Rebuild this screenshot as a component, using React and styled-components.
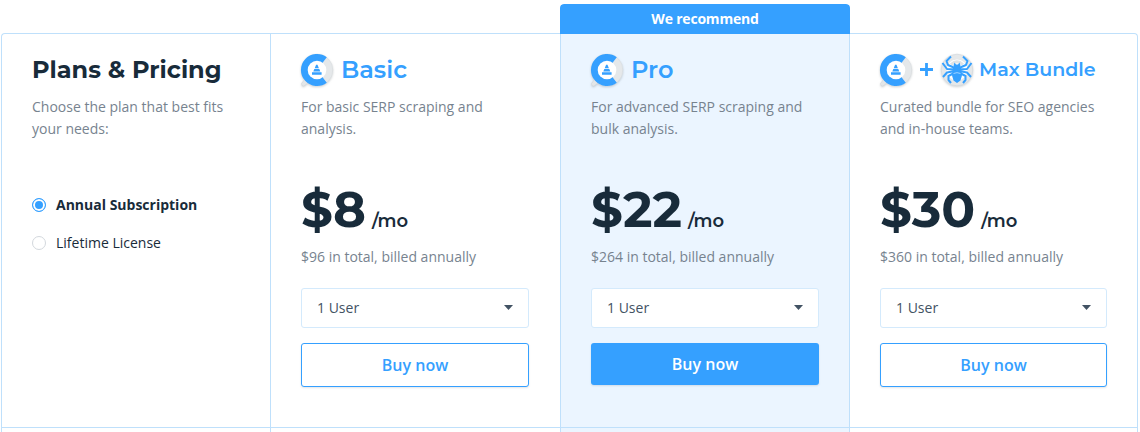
import React from "react";
import styled, { createGlobalStyle, css } from "styled-components";

const display = `"Montserrat", Inter, sans-serif`;
const blue = "#35a0ff";
const line = "#bfe0fb";

const GlobalStyle = createGlobalStyle`
  * { box-sizing: border-box; }
  body { margin: 0; background: #fff; font-family: "Open Sans", sans-serif; overflow: hidden; }
  h2, h3, p { margin: 0; }
`;

const Page = styled.main`
  width: 1140px;
  height: 432px;
  overflow: hidden;
  padding: 4px 2px 0 1px;
`;

const Plans = styled.section`
  display: grid;
  grid-template-columns: 269px 290px 290px 288px;
  align-items: end;
`;

const Column = styled.article`
  height: 399px;
  border-left: 1px solid ${line};
  border-top: 1px solid ${line};
  ${(p) => p.$first && css`border-top-left-radius: 4px;`}
  ${(p) => p.$last && css`
    border-left: 0;
    border-right: 1px solid ${line};
    border-top-right-radius: 4px;
  `}
  ${(p) => p.$featured && css`
    height: 428px;
    border-top: 0;
    border-right: 1px solid ${line};
    background: #ebf5ff;
  `}
`;

const Banner = styled.div`
  height: 30px;
  margin: 0 -1px;
  border-radius: 4px 4px 0 0;
  background: ${blue};
  color: #fff;
  font-size: 14px;
  font-weight: 700;
  letter-spacing: -0.2px;
  line-height: 30px;
  text-align: center;
`;

const FeaturedWrap = styled.div`
  background: #fff;
  border-radius: 4px 4px 0 0;
  overflow: hidden;
`;

const Body = styled.div`
  height: 394px;
  padding: 18px ${(p) => p.$right || 30}px 0 30px;
  border-bottom: 1px solid ${line};
`;

const Heading = styled.header`
  display: flex;
  align-items: center;
  height: 36px;
`;

const Title = styled.h2`
  font-family: ${display};
  font-size: ${(p) => p.$size}px;
  font-weight: ${(p) => p.$weight || 600};
  line-height: 36px;
  color: ${(p) => (p.$dark ? "#182b3a" : blue)};
  white-space: nowrap;
`;

const Logo = styled.svg`
  display: block;
  flex: none;
  width: 36px;
  height: 36px;
  margin: 0 ${(p) => p.$gap}px 0 -2px;
  overflow: visible;
  filter: drop-shadow(0 1px 1px rgba(60, 70, 80, 0.25));
`;

const Plus = styled.svg`
  display: block;
  flex: none;
  width: 13px;
  height: 13px;
  margin: 0 8px 2px 0;
`;

const Description = styled.p`
  height: 44px;
  margin-top: 8px;
  font-size: 14px;
  line-height: 22px;
  color: #77838f;
  white-space: nowrap;
`;

const Options = styled.div`
  display: grid;
  gap: 16px;
  margin-top: 53px;
`;

const Option = styled.label`
  display: flex;
  align-items: center;
  gap: 10px;
  height: 22px;
  font-size: 14px;
  font-weight: ${(p) => (p.$selected ? 700 : 400)};
  color: #182b3a;
  white-space: nowrap;
`;

const Radio = styled.span`
  width: 14px;
  height: 14px;
  margin-top: 1px;
  border: 1px solid ${(p) => (p.$selected ? blue : "#d3d8dd")};
  border-radius: 50%;
  background: ${(p) => (p.$selected ? blue : "#fff")};
  box-shadow: inset 0 0 0 2px #fff;
`;

const Price = styled.div`
  display: flex;
  align-items: baseline;
  height: 60px;
  margin-top: 40px;
  font-family: ${display};
  color: #182b3a;
  line-height: 60px;
`;

const Amount = styled.span`
  font-size: 50px;
  font-weight: 700;
`;

const Period = styled.span`
  margin-left: 6px;
  font-size: 18px;
  font-weight: 600;
`;

const Billing = styled.p`
  margin-top: 6px;
  font-size: 14px;
  line-height: 22px;
  color: #77838f;
`;

const Select = styled.div`
  display: flex;
  align-items: center;
  justify-content: space-between;
  height: 40px;
  margin-top: 20px;
  padding: 0 15px 2px;
  border: 1px solid #d4eafc;
  border-radius: 3px;
  background: #fff;
  font-size: 14px;
  color: #425263;
`;

const Caret = styled.svg`
  display: block;
  width: 9px;
  height: 5px;
  margin-top: 1px;
`;

const Buy = styled.button`
  display: block;
  width: 100%;
  height: ${(p) => (p.$filled ? 42 : 44)}px;
  margin-top: 15px;
  padding: 0;
  border: ${(p) => (p.$filled ? "0" : `1px solid ${blue}`)};
  border-radius: 3px;
  background: ${(p) => (p.$filled ? blue : "#fff")};
  box-shadow: 0 1px 2px rgba(24, 43, 58, 0.12);
  color: ${(p) => (p.$filled ? "#fff" : blue)};
  font: 600 16px "Open Sans", sans-serif;
`;

function CheckerLogo({ gap }) {
  return (
    <Logo $gap={gap} viewBox="0 0 36 36" aria-hidden="true">
      <path d="M6 27 2.5 31.5Q2.5 34.5 5 34L10 30Z" fill="#e3e6e8" stroke="#d0d4d8" strokeWidth=".5" />
      <circle cx="18" cy="18" r="15.8" fill="#e5e8ea" stroke="#d8dcdf" strokeWidth=".5" />
      <path d="M27.8 5.2A16.1 16.1 0 1 0 27.8 30.8L18 18Z" fill={blue} />
      <circle cx="18" cy="18" r="9.3" fill="#fff" />
      <path d="M17.1 12.8h1.4l1.4 3.4h-4.2zM15.3 17h5l1 2.4h-7zM13 20.3h9.6v2.4h-9.6z" fill={blue} />
    </Logo>
  );
}

function SpiderLogo({ gap }) {
  return (
    <Logo $gap={gap} viewBox="0 0 36 36" aria-hidden="true">
      <circle cx="18" cy="18" r="15.8" fill="#e5e8ea" stroke="#d4d8db" strokeWidth=".6" />
      <circle cx="18" cy="18" r="10.5" fill="#fff" />
      <path d="M12 12.5Q18 7 24 12.5" fill="none" stroke="#dfe3e6" strokeWidth="3" />
      <path
        d="M16 16 9 13 7.5 9 12 4.5M20 16 27 13 28.5 9 24 4.5M16 17.5 8 17 3.5 11M20 17.5 28 17 32.5 11M16 19 8 20.5 4 25M20 19 28 20.5 32 25M16 20.5 9.5 24 9.5 28 12 31M20 20.5 26.5 24 26.5 28 24 31"
        fill="none"
        stroke={blue}
        strokeWidth="2"
        strokeLinejoin="round"
      />
      <path d="M15.5 10.5 17 12.5h2l1.5-2 1 3-.8 2 1.8 2-.8 3 1.3 3-1.5 5L18 31l-3.5-2.5-1.5-5 1.3-3-.8-3 1.8-2-.8-2Z" fill={blue} />
      <path d="M14.5 21.5Q18 19.8 21.5 21.5" fill="none" stroke="#b9ddff" strokeWidth=".8" />
    </Logo>
  );
}

function Offer({ amount, billing, filled }) {
  return (
    <>
      <Price>
        <Amount>{amount}</Amount>
        <Period>/mo</Period>
      </Price>
      <Billing>{billing}</Billing>
      <Select>
        1 User
        <Caret viewBox="0 0 9 5"><path d="M0 0h9L4.5 5z" fill="#425263" /></Caret>
      </Select>
      <Buy $filled={filled}>Buy now</Buy>
    </>
  );
}

export default function App() {
  return (
    <Page>
      <GlobalStyle />
      <Plans>
        <Column $first>
          <Body>
            <Heading><Title $dark $size={24} $weight={700}>Plans &amp; Pricing</Title></Heading>
            <Description>Choose the plan that best fits<br />your needs:</Description>
            <Options>
              <Option $selected><Radio $selected />Annual Subscription</Option>
              <Option><Radio />Lifetime License</Option>
            </Options>
          </Body>
        </Column>
        <Column>
          <Body $right={31}>
            <Heading><CheckerLogo gap={6} /><Title $size={24}>Basic</Title></Heading>
            <Description>For basic SERP scraping and<br />analysis.</Description>
            <Offer amount="$8" billing="$96 in total, billed annually" />
          </Body>
        </Column>
        <FeaturedWrap>
          <Column $featured>
            <Banner>We recommend</Banner>
            <Body>
              <Heading><CheckerLogo gap={6} /><Title $size={24}>Pro</Title></Heading>
              <Description>For advanced SERP scraping and<br />bulk analysis.</Description>
              <Offer filled amount="$22" billing="$264 in total, billed annually" />
            </Body>
          </Column>
        </FeaturedWrap>
        <Column $last>
          <Body>
            <Heading>
              <CheckerLogo gap={6} />
              <Plus viewBox="0 0 13 13"><path d="M6.5 0v13M0 6.5h13" stroke={blue} strokeWidth="2.8" /></Plus>
              <SpiderLogo gap={4} />
              <Title $size={19}>Max Bundle</Title>
            </Heading>
            <Description>Curated bundle for SEO agencies<br />and in-house teams.</Description>
            <Offer amount="$30" billing="$360 in total, billed annually" />
          </Body>
        </Column>
      </Plans>
    </Page>
  );
}
